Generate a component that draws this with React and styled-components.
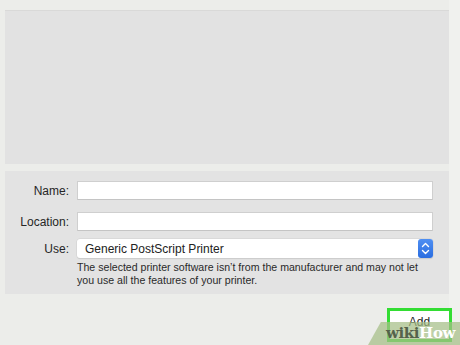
import React from "react";
import styled, { createGlobalStyle } from "styled-components";

const Global = createGlobalStyle`
  html, body { margin: 0; padding: 0; background: #ecedea; }
  #root { width: 460px; height: 345px; overflow: hidden; }
`;

const Page = styled.div`
  position: relative;
  width: 460px;
  height: 345px;
  box-sizing: border-box;
  padding: 10px 11px 0 5px;
  display: flex;
  flex-direction: column;
  gap: 7px;
  font-family: "Liberation Sans", Arial, sans-serif;
  color: #2a2a2a;
  background: linear-gradient(to right, #ecedea 449px, #f0f1ee 449px);
`;

const PreviewPanel = styled.div`
  height: 154px;
  background: #e2e2e2;
  border-top: 1px solid #d9d9d8;
  box-sizing: border-box;
`;

const FormPanel = styled.div`
  height: 123px;
  background: #e3e3e3;
  box-sizing: border-box;
  padding: 10px 16px 0 0;
  display: flex;
  flex-direction: column;
`;

const Row = styled.div`
  display: flex;
  align-items: center;
  gap: 8px;
  margin-top: ${(p) => p.$mt || 0}px;
`;

const Label = styled.div`
  width: 64px;
  flex: none;
  text-align: right;
  font-size: 12px;
  color: #262626;
`;

const Field = styled.div`
  flex: 1;
  height: 19px;
  background: #fff;
  border: 1px solid #cfcfcf;
  border-bottom-color: #c4c4c4;
  box-sizing: border-box;
`;

const Popup = styled.div`
  flex: 1;
  height: 19px;
  background: #fff;
  box-shadow: 0 0 0 0.5px #d0d0d0, 0 1px 1px rgba(0,0,0,0.12);
  border-radius: 3px;
  display: flex;
  align-items: center;
  justify-content: space-between;
  padding-left: 8px;
  font-size: 12px;
  color: #222;
`;

const Stepper = styled.div`
  width: 15px;
  height: 19px;
  border-radius: 3px;
  background: linear-gradient(#4f8ff2, #2a6de0);
  display: flex;
  align-items: center;
  justify-content: center;
`;

const Help = styled.div`
  margin: 3px 0 0 72px;
  font-size: 10.6px;
  line-height: 13px;
  color: #2a2a2a;
`;

const Footer = styled.div`
  display: flex;
  justify-content: flex-end;
  padding-top: 7px;
  margin-right: -3px;
`;

const AddButton = styled.div`
  width: 59px;
  height: 24px;
  border: 3px solid #33dd33;
  background: #fff;
  display: flex;
  justify-content: center;
  padding-top: 4px;
  box-sizing: content-box;
  font-size: 12px;
  color: #222;
`;

const Watermark = styled.div`
  position: absolute;
  right: 0;
  bottom: 0;
  width: 92px;
  height: 23px;
  background: rgba(165, 190, 135, 0.72);
  clip-path: polygon(14% 0, 100% 0, 100% 100%, 0 100%);
  display: flex;
  align-items: flex-start;
  justify-content: flex-end;
  padding: 4px 5px 0 0;
  box-sizing: border-box;
  font-family: "DejaVu Serif", "Liberation Serif", serif;
  font-weight: bold;
  font-size: 15px;
  line-height: 15px;
  letter-spacing: -0.4px;
`;

const Wiki = styled.span`
  color: #55624b;
`;
const How = styled.span`
  color: #ffffff;
`;

export default function App() {
  return (
    <>
      <Global />
      <Page>
        <PreviewPanel />
        <FormPanel>
          <Row>
            <Label>Name:</Label>
            <Field />
          </Row>
          <Row $mt={12}>
            <Label>Location:</Label>
            <Field />
          </Row>
          <Row $mt={8}>
            <Label>Use:</Label>
            <Popup>
              <span>Generic PostScript Printer</span>
              <Stepper>
                <svg width="9" height="13" viewBox="0 0 9 13">
                  <path d="M1.5 4.5 L4.5 1.5 L7.5 4.5 M1.5 8.5 L4.5 11.5 L7.5 8.5" fill="none" stroke="#fff" strokeWidth="1.4" strokeLinecap="round" strokeLinejoin="round" />
                </svg>
              </Stepper>
            </Popup>
          </Row>
          <Help>
            The selected printer software isn’t from the manufacturer and may not let you use all the features of your printer.
          </Help>
        </FormPanel>
        <Footer>
          <AddButton>Add</AddButton>
        </Footer>
        <Watermark>
          <Wiki>wiki</Wiki>
          <How>How</How>
        </Watermark>
      </Page>
    </>
  );
}
